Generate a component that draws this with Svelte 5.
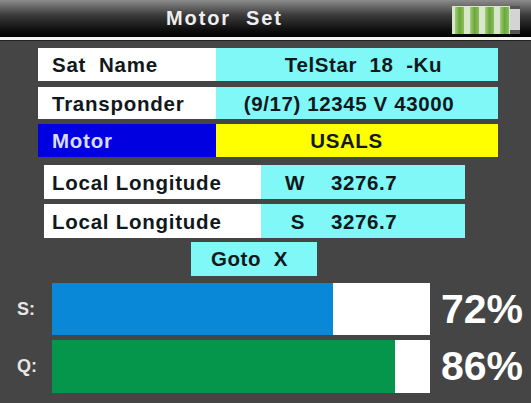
<script>
  const signals = [
    { label: "S:", value: 72, fill: 74.3, color: "#0a88d8", height: 52 },
    { label: "Q:", value: 86, fill: 90.8, color: "#05964c", height: 53 }
  ];
</script>

<div class="screen">
  <header class="title">
    <span class="title-text">Motor&nbsp; Set</span>
    <div class="battery">
      <i></i><i></i><i></i><i></i>
      <b></b>
    </div>
  </header>
  <div class="rule"></div>

  <section class="main">
    <div class="row row-1">
      <div class="name">Sat&nbsp; Name</div>
      <div class="val">TelStar&nbsp; 18&nbsp; -Ku</div>
    </div>
    <div class="row row-2">
      <div class="name">Transponder</div>
      <div class="val">(9/17) 12345 V 43000</div>
    </div>
    <div class="row row-3">
      <div class="name on">Motor</div>
      <div class="val yellow">USALS</div>
    </div>
  </section>

  <section class="sub">
    <div class="row row-4">
      <div class="name">Local Longitude</div>
      <div class="val coord"><span class="dir">W</span><span>3276.7</span></div>
    </div>
    <div class="row row-5">
      <div class="name">Local Longitude</div>
      <div class="val coord"><span class="dir">S</span><span>3276.7</span></div>
    </div>
  </section>

  <div class="goto">Goto&nbsp; X</div>

  <section class="bars">
    {#each signals as s}
      <div class="signal">
        <span class="sig-label">{s.label}</span>
        <div class="track" style="height: {s.height}px">
          <div class="fill" style="width: {s.fill}%; background: {s.color}"></div>
        </div>
        <span class="pct">{s.value}%</span>
      </div>
    {/each}
  </section>
</div>

<style>
  :global(body) {
    margin: 0;
  }

  .screen {
    width: 531px;
    height: 403px;
    overflow: hidden;
    background: #454545;
    font-family: "Liberation Sans", Arial, sans-serif;
    font-weight: 700;
    color: #10181c;
  }

  .title {
    height: 37px;
    display: flex;
    align-items: center;
    justify-content: space-between;
    padding: 0 11px 0 166px;
    box-sizing: border-box;
    background: linear-gradient(#8c8c8c, #3c3c3c 40%, #0a0a0a 85%, #000);
  }

  .title-text {
    color: #efefef;
    font-size: 20px;
    letter-spacing: 1.9px;
  }

  .battery {
    width: 68px;
    height: 28px;
    margin-top: 3px;
    display: flex;
    gap: 6px;
    padding: 1px 0 0 3px;
    box-sizing: border-box;
    position: relative;
    background: linear-gradient(90deg, #d9e6cc 85%, #555 85%);
  }

  .battery i {
    width: 9px;
    background: linear-gradient(90deg, #a4cc78, #68a83a 50%, #8cbc5c);
  }

  .battery b {
    position: absolute;
    right: 0;
    top: 3px;
    width: 10px;
    height: 21px;
    background: #d4d4d4;
  }

  .rule {
    height: 3px;
    background: #f4f4f4;
    border-bottom: 1px solid #222;
    margin-bottom: 7px;
  }

  .main {
    margin-left: 38px;
    width: 460px;
  }

  .row {
    display: flex;
    font-size: 20.5px;
  }

  .row-1 { height: 33px; margin-bottom: 6px; }
  .row-2 { height: 32px; margin-bottom: 5px; }
  .row-3 { height: 33px; }

  .name {
    width: 178px;
    box-sizing: border-box;
    padding: 1px 0 0 14px;
    background: #fff;
    display: flex;
    align-items: center;
    letter-spacing: 0.75px;
  }

  .on {
    background: #0000e0;
    color: #d8dcff;
  }

  .val {
    flex: 1;
    background: #80f8f8;
    display: flex;
    align-items: center;
    justify-content: center;
    padding-top: 1px;
    letter-spacing: 0.6px;
  }

  .row-1 .val { padding-left: 13px; }
  .row-2 .val { padding-right: 16px; }
  .row-3 .val { padding-right: 21px; }

  .yellow {
    background: #ffff00;
  }

  .sub {
    margin: 8px 0 0 44px;
    width: 421px;
  }

  .row-4 { height: 34px; margin-bottom: 5px; }
  .row-5 { height: 34px; }

  .sub .name {
    width: 217px;
    padding-left: 8px;
  }

  .coord {
    justify-content: flex-start;
  }

  .dir {
    width: 44px;
    text-align: right;
    margin-right: 26px;
  }

  .goto {
    margin: 4px 0 0 191px;
    width: 126px;
    height: 34px;
    padding-right: 9px;
    box-sizing: border-box;
    background: #80f8f8;
    display: flex;
    align-items: center;
    justify-content: center;
    font-size: 20.5px;
    letter-spacing: 0.6px;
  }

  .bars {
    margin-top: 7px;
    display: flex;
    flex-direction: column;
    gap: 5px;
  }

  .signal {
    display: flex;
    align-items: center;
  }

  .sig-label {
    width: 52px;
    box-sizing: border-box;
    padding-left: 17px;
    color: #e6e6e6;
    font-size: 18px;
  }

  .track {
    width: 378px;
    background: #fff;
  }

  .fill {
    height: 100%;
  }

  .pct {
    margin-left: 11px;
    color: #fff;
    font-size: 41px;
    letter-spacing: 0;
  }
</style>
